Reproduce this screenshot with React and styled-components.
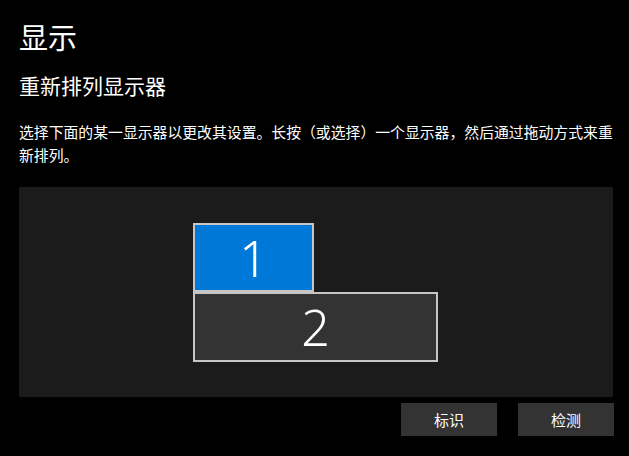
import styled, { createGlobalStyle } from "styled-components"

const Global = createGlobalStyle`
  html, body {
    margin: 0;
    background: #000;
    color: #fff;
    font-family: "Noto Sans CJK SC", "Noto Sans", sans-serif;
  }
`

const Page = styled.div`
  width: 629px;
  height: 456px;
  padding: 0 12px 0 19px;
  box-sizing: border-box;
  overflow: hidden;
`

const Title = styled.h1`
  margin: 0;
  padding-top: 17px;
  font-size: 29px;
  font-weight: 400;
  line-height: 38px;
`

const SubTitle = styled.h2`
  margin: 16px 0 0;
  font-size: 21px;
  font-weight: 400;
  line-height: 28px;
`

const Text = styled.p`
  margin: 21px 0 0;
  font-size: 14.85px;
  line-height: 23px;
`

const Canvas = styled.div`
  position: relative;
  margin-top: 21px;
  width: 594px;
  height: 210px;
  background: #1b1b1b;
`

const Monitor = styled.div`
  position: absolute;
  box-sizing: border-box;
  display: flex;
  align-items: center;
  justify-content: center;
  border: 2px solid #c6c6c6;
  background: ${p => (p.$active ? "#0078d7" : "#333333")};
  font-family: "Noto Sans", "Open Sans", sans-serif;
  font-weight: 300;
  font-size: 50px;
  color: #fff;
`

const Actions = styled.div`
  display: flex;
  justify-content: flex-end;
  gap: 21px;
  margin-top: 6px;
  width: 595px;
`

const Button = styled.button`
  width: 96px;
  height: 33px;
  border: none;
  background: #333333;
  color: #fff;
  font-family: "Noto Sans CJK SC", sans-serif;
  font-size: 15px;
  cursor: pointer;
`

const monitors = [
  { id: 1, left: 174, top: 36, width: 121, height: 69, active: true },
  { id: 2, left: 174, top: 105, width: 245, height: 70, active: false },
]

export default function App() {
  return (
    <Page>
      <Global />
      <Title>显示</Title>
      <SubTitle>重新排列显示器</SubTitle>
      <Text>
        选择下面的某一显示器以更改其设置。长按（或选择）一个显示器，然后通过拖动方式来重新排列。
      </Text>
      <Canvas>
        {monitors.map(m => (
          <Monitor
            key={m.id}
            $active={m.active}
            style={{ left: m.left, top: m.top, width: m.width, height: m.height }}
          >
            {m.id}
          </Monitor>
        ))}
      </Canvas>
      <Actions>
        <Button>标识</Button>
        <Button>检测</Button>
      </Actions>
    </Page>
  )
}
